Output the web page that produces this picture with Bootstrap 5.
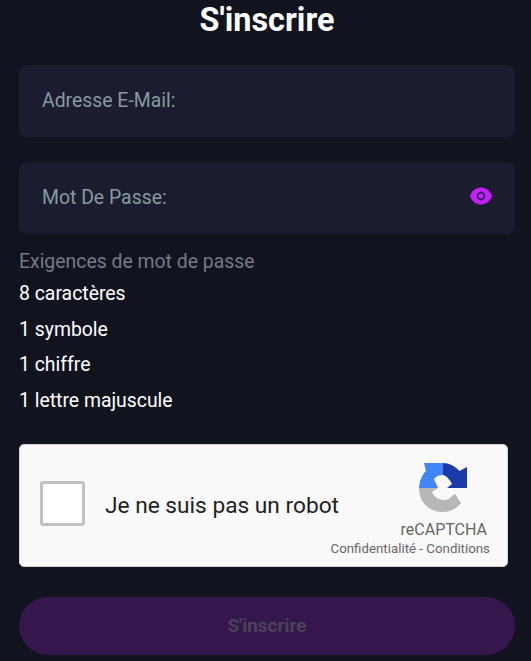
<!DOCTYPE html>
<html lang="fr">
<head>
<meta charset="utf-8">
<title>S'inscrire</title>
<link href="https://cdn.jsdelivr.net/npm/bootstrap@5.3.0/dist/css/bootstrap.min.css" rel="stylesheet">
<style>
html,body{height:661px;overflow:hidden}
body{background:#11131f;font-family:Roboto,"Liberation Sans",sans-serif;color:#fff}
.page-wrap{width:496px;margin-left:19px}
.page-title{font-size:32.4px;font-weight:700;line-height:40px;margin:0;height:65px;color:#fff}
.field-box{height:72px;background:#1b1c2f;border-radius:8px;padding:0 22px 0 23px;margin-bottom:25px;color:#879a9f;font-size:19.4px}
.eye-icon{width:24px;height:24px;display:block;position:relative;top:-2px}
.req-head{font-size:19.4px;line-height:24px;color:#767a86;margin-top:-9px;margin-bottom:8px}
.req-list{font-size:19.4px;line-height:24px;color:#fff;gap:11.6px;margin-bottom:31.400px}
.captcha-box{width:489px;height:123px;background:#f9f9f9;border:1px solid #d3d3d3;border-radius:5px;padding:0 17px 0 20px;color:#222}
.captcha-check{width:45px;height:45px;background:#fff;border:3px solid #c1c1c1;border-radius:3px;margin-bottom:4px}
.captcha-label{font-size:22.7px;margin-left:20px;margin-right:-40px;white-space:nowrap}
.captcha-brand{margin-left:auto;align-self:flex-start;margin-top:13px}
.captcha-mark{margin-right:3px}
.captcha-logo{width:58px;height:60px;display:block;margin-bottom:2px;margin-right:1px}
.captcha-name{font-size:16px;line-height:20px;color:#666}
.captcha-links{font-size:13.3px;line-height:18px;color:#666;white-space:nowrap}
.submit-btn{display:block;width:100%;height:58px;margin-top:30px;border:0;border-radius:29px;font-size:19px;font-weight:700}
.submit-btn:disabled{background:#36174d;color:#4c4259;opacity:1}
</style>
</head>
<body>
<main class="page-wrap">
<h1 class="page-title text-center">S'inscrire</h1>
<div class="field-box d-flex align-items-center"><span>Adresse E-Mail:</span></div>
<div class="field-box d-flex align-items-center justify-content-between"><span>Mot De Passe:</span>
<svg class="eye-icon" viewBox="0 0 24 24" aria-hidden="true"><path fill="#c41ff5" d="M12 3.500C6.500 3.500 2.500 7.500 1 12c1.500 4.500 5.500 8.500 11 8.500s9.500-4 11-8.500c-1.500-4.500-5.500-8.500-11-8.500z"/><circle cx="12" cy="12" r="3.400" fill="none" stroke="#3a1a6b" stroke-width="1.800"/></svg></div>
<div class="req-head">Exigences de mot de passe</div>
<div class="req-list d-flex flex-column"><div>8 caractères</div><div>1 symbole</div><div>1 chiffre</div><div>1 lettre majuscule</div></div>
<div class="captcha-box d-flex align-items-center">
<div class="captcha-check flex-shrink-0"></div>
<div class="captcha-label">Je ne suis pas un robot</div>
<div class="captcha-brand d-flex flex-column align-items-end">
<div class="captcha-mark d-flex flex-column align-items-center">
<svg class="captcha-logo" viewBox="0 0 58 60" aria-hidden="true">
<path fill="#1c3aa9" d="M29 5C35 5 41 8 45.500 13L53 9V30H33L38 26C36 22 33 18 29 17z"/>
<path fill="#4285f4" d="M5 30C5.500 23 8 17 12 13L10 5H29V17C25 17 22 18.500 20 21L24 30z"/>
<path fill="#b7b7b7" d="M5 30H24L18 34C20 39 25 42 29 42C33 42 36 41 38 38L41 36L47 45C42 51 36 54 29 54C14 54 5 43 5 30z"/>
</svg>
<div class="captcha-name">reCAPTCHA</div>
</div>
<div class="captcha-links">Confidentialité - Conditions</div>
</div>
</div>
<button class="submit-btn" disabled>S'inscrire</button>
</main>
<script src="https://cdn.jsdelivr.net/npm/bootstrap@5.3.0/dist/js/bootstrap.bundle.min.js"></script>
</body>
</html>
